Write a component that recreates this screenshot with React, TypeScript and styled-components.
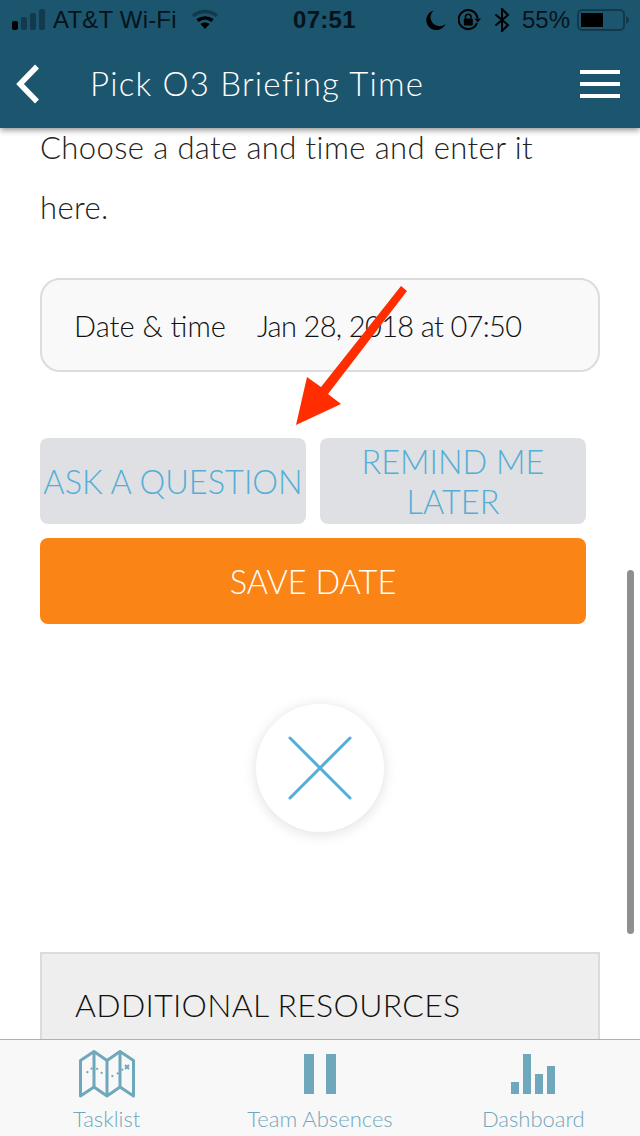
import React from 'react';
import styled, { createGlobalStyle } from 'styled-components';

const GlobalStyle = createGlobalStyle`
  html, body {
    margin: 0;
    padding: 0;
    background: #fff;
  }
  * {
    box-sizing: border-box;
  }
`;

const BODY_FONT = `Lato, "Open Sans", sans-serif`;
const STATUS_FONT = `"Liberation Sans", Arial, sans-serif`;

const Screen = styled.div`
  position: relative;
  width: 640px;
  height: 1136px;
  overflow: hidden;
  display: flex;
  flex-direction: column;
  background: #fff;
  font-family: ${BODY_FONT};
`;

const Header = styled.header`
  position: relative;
  z-index: 2;
  height: 128px;
  flex: none;
  background: #1c556e;
  box-shadow: 0 2px 6px rgba(0, 0, 0, 0.45);
`;

const StatusBar = styled.div`
  height: 40px;
  display: flex;
  align-items: center;
  padding: 0 11px 0 12px;
  font-family: ${STATUS_FONT};
  font-size: 24px;
  color: #06131a;
`;

const StatusLeft = styled.div`
  flex: 1;
  display: flex;
  align-items: center;
  gap: 7px;
`;

const Carrier = styled.span`
  letter-spacing: 0.2px;
`;

const Clock = styled.span`
  position: absolute;
  left: 293px;
  font-weight: 700;
  letter-spacing: 0.3px;
`;

const StatusRight = styled.div`
  display: flex;
  align-items: center;
  gap: 12px;
`;

const Percent = styled.span`
  margin-right: -5px;
`;

const Nav = styled.div`
  height: 88px;
  display: flex;
  align-items: center;
  padding: 0 20px 0 16px;
`;

const Title = styled.h1`
  flex: 1;
  margin: -2px 0 0 50px;
  font-size: 33px;
  font-weight: 300;
  color: #fff;
  letter-spacing: 1.2px;
`;

const Burger = styled.div`
  width: 40px;
  display: flex;
  flex-direction: column;
  gap: 8px;
`;

const BurgerBar = styled.span`
  height: 4px;
  background: #fff;
`;

const Content = styled.main`
  flex: 1;
  min-height: 0;
  overflow: hidden;
  padding: 0 40px;
`;

const Intro = styled.p`
  margin: -11px 0 0;
  font-size: 31px;
  line-height: 60px;
  font-weight: 300;
  letter-spacing: 0.4px;
  color: #222;
`;

const Field = styled.div`
  margin-top: 41px;
  height: 94px;
  display: flex;
  align-items: center;
  gap: 31px;
  padding: 0 32px;
  background: #f9f9f9;
  border: 2px solid #dcdcdc;
  border-radius: 20px;
  font-size: 29px;
  font-weight: 300;
  color: #111;
`;

const FieldValue = styled.span`
  letter-spacing: -0.65px;
`;

const Actions = styled.div`
  margin-top: 66px;
  width: 546px;
  display: grid;
  grid-template-columns: 266px 266px;
  gap: 14px;
`;

const ActionButton = styled.button<{ $primary?: boolean; $wide?: boolean }>`
  height: 86px;
  padding: 2px 0 0;
  border: 0;
  border-radius: 8px;
  grid-column: ${(p) => (p.$wide ? '1 / -1' : 'auto')};
  background: ${(p) => (p.$primary ? '#fb8416' : '#dfe0e4')};
  color: ${(p) => (p.$primary ? '#fff' : '#55aed5')};
  font-family: inherit;
  font-size: 32.5px;
  font-weight: 300;
  line-height: 40px;
`;

const CloseRow = styled.div`
  margin-top: 80px;
  display: flex;
  justify-content: center;
`;

const CloseButton = styled.div`
  width: 128px;
  height: 128px;
  border-radius: 50%;
  display: flex;
  align-items: center;
  justify-content: center;
  background: #fff;
  box-shadow: 0 2px 14px rgba(0, 0, 0, 0.13);
`;

const Resources = styled.section`
  margin-top: 120px;
  height: 120px;
  padding: 31px 33px;
  background: #eeeeee;
  border: 2px solid #dcdcdc;
`;

const ResourcesTitle = styled.h2`
  margin: 0;
  font-size: 32px;
  line-height: 40px;
  font-weight: 300;
  letter-spacing: 0.3px;
  color: #111;
`;

const TabBar = styled.nav`
  position: relative;
  z-index: 2;
  height: 97px;
  flex: none;
  display: grid;
  grid-template-columns: repeat(3, 1fr);
  background: #f8f8f8;
  border-top: 1px solid #b0b0b0;
`;

const Tab = styled.div`
  display: flex;
  flex-direction: column;
  align-items: center;
  padding-top: 10px;
  color: #6fa8bc;
`;

const TabIcon = styled.div`
  height: 50px;
  display: flex;
  align-items: flex-start;
`;

const TabLabel = styled.span`
  margin-top: 6px;
  font-size: 22px;
  font-weight: 300;
  line-height: 26px;
`;

const ArrowOverlay = styled.svg`
  position: absolute;
  z-index: 1;
  left: 0;
  top: 0;
  pointer-events: none;
`;

const ScrollThumb = styled.div`
  position: absolute;
  z-index: 1;
  left: 627px;
  top: 570px;
  width: 7px;
  height: 364px;
  border-radius: 4px;
  background: #8f8f8f;
`;

const SignalIcon = () => (
  <svg width="34" height="22" viewBox="0 0 34 22">
    <rect x="0" y="12" width="6" height="9" rx="2" fill="#000" />
    <rect x="9" y="8" width="6" height="13" rx="2" fill="#123a4c" />
    <rect x="18" y="4" width="6" height="17" rx="2" fill="#123a4c" />
    <rect x="27" y="0" width="6" height="21" rx="2" fill="#123a4c" />
  </svg>
);

const WifiIcon = () => (
  <svg width="28" height="22" viewBox="0 0 28 22" style={{ marginLeft: 7 }} fill="none">
    <path d="M2 7 C9 1 19 1 26 7" stroke="#123a4c" strokeWidth="3.5" />
    <path d="M6.5 11.5 C11 8 17 8 21.5 11.5" stroke="#000" strokeWidth="3.5" />
    <path d="M14 20 L9.5 15 C12 13 16 13 18.5 15 Z" fill="#000" />
  </svg>
);

const MoonIcon = () => (
  <svg width="20" height="20" viewBox="0 0 20 20">
    <path d="M7.5 0.5 A10 10 0 1 0 19.5 14 A9 9 0 0 1 7.5 0.5 Z" fill="#000" />
  </svg>
);

const RotationLockIcon = () => (
  <svg width="24" height="22" viewBox="0 0 24 22" fill="none">
    <path d="M19 14 A9.5 9.5 0 1 1 19.5 9" stroke="#000" strokeWidth="2" />
    <path d="M16.5 9.5 H23 L19.8 13.5 Z" fill="#000" />
    <rect x="5.8" y="9.5" width="9" height="7" rx="1" fill="#000" />
    <path d="M7.5 9.5 V7.5 A2.8 2.8 0 0 1 13 7.5 V9.5" stroke="#000" strokeWidth="1.6" />
  </svg>
);

const BluetoothIcon = () => (
  <svg width="16" height="24" viewBox="0 0 16 24" fill="none">
    <path d="M1.5 6.5 L14 17 L8 23 V1 L14 7 L1.5 17.5" stroke="#000" strokeWidth="2" />
  </svg>
);

const BatteryIcon = () => (
  <svg width="52" height="22" viewBox="0 0 52 22">
    <rect x="1" y="1" width="46" height="20" rx="4" fill="none" stroke="#123a4c" strokeWidth="2" />
    <rect x="4" y="4" width="22" height="14" fill="#000" />
    <path d="M49 7.5 Q52 8.5 52 11 Q52 13.5 49 14.5 Z" fill="#123a4c" />
  </svg>
);

const BackIcon = () => (
  <svg width="24" height="40" viewBox="0 0 24 40" fill="none">
    <path d="M21 2.5 L4 20 L21 37.5" stroke="#fff" strokeWidth="5.5" />
  </svg>
);

const CloseIcon = () => (
  <svg width="64" height="64" viewBox="0 0 64 64" stroke="#55aed5" strokeWidth="3" strokeLinecap="round">
    <path d="M2 2 L62 62" />
    <path d="M62 2 L2 62" />
  </svg>
);

const MapIcon = () => (
  <svg width="56" height="48" viewBox="0 0 56 48" fill="none" stroke="#6fa8bc">
    <path
      d="M1.5 10.5 L15 1.5 L28 10.5 L41 1.5 L54.5 10.5 V46 L41 37 L28 46 L15 37 L1.5 46 Z"
      strokeWidth="3"
      strokeLinejoin="round"
    />
    <path d="M15 2 V37 M28 10 V46 M41 2 V37" strokeWidth="3" />
    <path
      d="M8 23 L10 19 L17 18 L24 24 L31 27 L38 24 L44 19"
      strokeWidth="2"
      strokeDasharray="2 4"
    />
    <path d="M46 15 L50 19 M50 15 L46 19" strokeWidth="2" />
  </svg>
);

const PauseIcon = () => (
  <svg width="32" height="40" viewBox="0 0 32 40" fill="#6fa8bc" style={{ marginTop: 4 }}>
    <rect x="0" y="0" width="10" height="40" />
    <rect x="22" y="0" width="10" height="40" />
  </svg>
);

const BarsIcon = () => (
  <svg width="44" height="40" viewBox="0 0 44 40" fill="#6fa8bc" style={{ marginTop: 4 }}>
    <rect x="0" y="28" width="8" height="12" />
    <rect x="12" y="0" width="8" height="40" />
    <rect x="24" y="20" width="8" height="20" />
    <rect x="36" y="12" width="8" height="28" />
  </svg>
);

function App() {
  return (
    <Screen>
      <GlobalStyle />
      <Header>
        <StatusBar>
          <StatusLeft>
            <SignalIcon />
            <Carrier>AT&amp;T Wi-Fi</Carrier>
            <WifiIcon />
          </StatusLeft>
          <Clock>07:51</Clock>
          <StatusRight>
            <MoonIcon />
            <RotationLockIcon />
            <BluetoothIcon />
            <Percent>55%</Percent>
            <BatteryIcon />
          </StatusRight>
        </StatusBar>
        <Nav>
          <BackIcon />
          <Title>Pick O3 Briefing Time</Title>
          <Burger>
            <BurgerBar />
            <BurgerBar />
            <BurgerBar />
          </Burger>
        </Nav>
      </Header>

      <Content>
        <Intro>Choose a date and time and enter it here.</Intro>
        <Field>
          <span>Date &amp; time</span>
          <FieldValue>Jan 28, 2018 at 07:50</FieldValue>
        </Field>
        <Actions>
          <ActionButton>ASK A QUESTION</ActionButton>
          <ActionButton>REMIND ME LATER</ActionButton>
          <ActionButton $primary $wide>SAVE DATE</ActionButton>
        </Actions>
        <CloseRow>
          <CloseButton>
            <CloseIcon />
          </CloseButton>
        </CloseRow>
        <Resources>
          <ResourcesTitle>ADDITIONAL RESOURCES</ResourcesTitle>
        </Resources>
      </Content>

      <TabBar>
        <Tab>
          <TabIcon><MapIcon /></TabIcon>
          <TabLabel>Tasklist</TabLabel>
        </Tab>
        <Tab>
          <TabIcon><PauseIcon /></TabIcon>
          <TabLabel>Team Absences</TabLabel>
        </Tab>
        <Tab>
          <TabIcon><BarsIcon /></TabIcon>
          <TabLabel>Dashboard</TabLabel>
        </Tab>
      </TabBar>

      <ScrollThumb />
      {/* red annotation arrow drawn on top of the screenshot */}
      <ArrowOverlay width="640" height="1136" viewBox="0 0 640 1136">
        <polygon
          points="401,286 407,291 328,394 341,404 296,425 307,377 321,387"
          fill="#ff2d00"
        />
      </ArrowOverlay>
    </Screen>
  );
}

export default App;
